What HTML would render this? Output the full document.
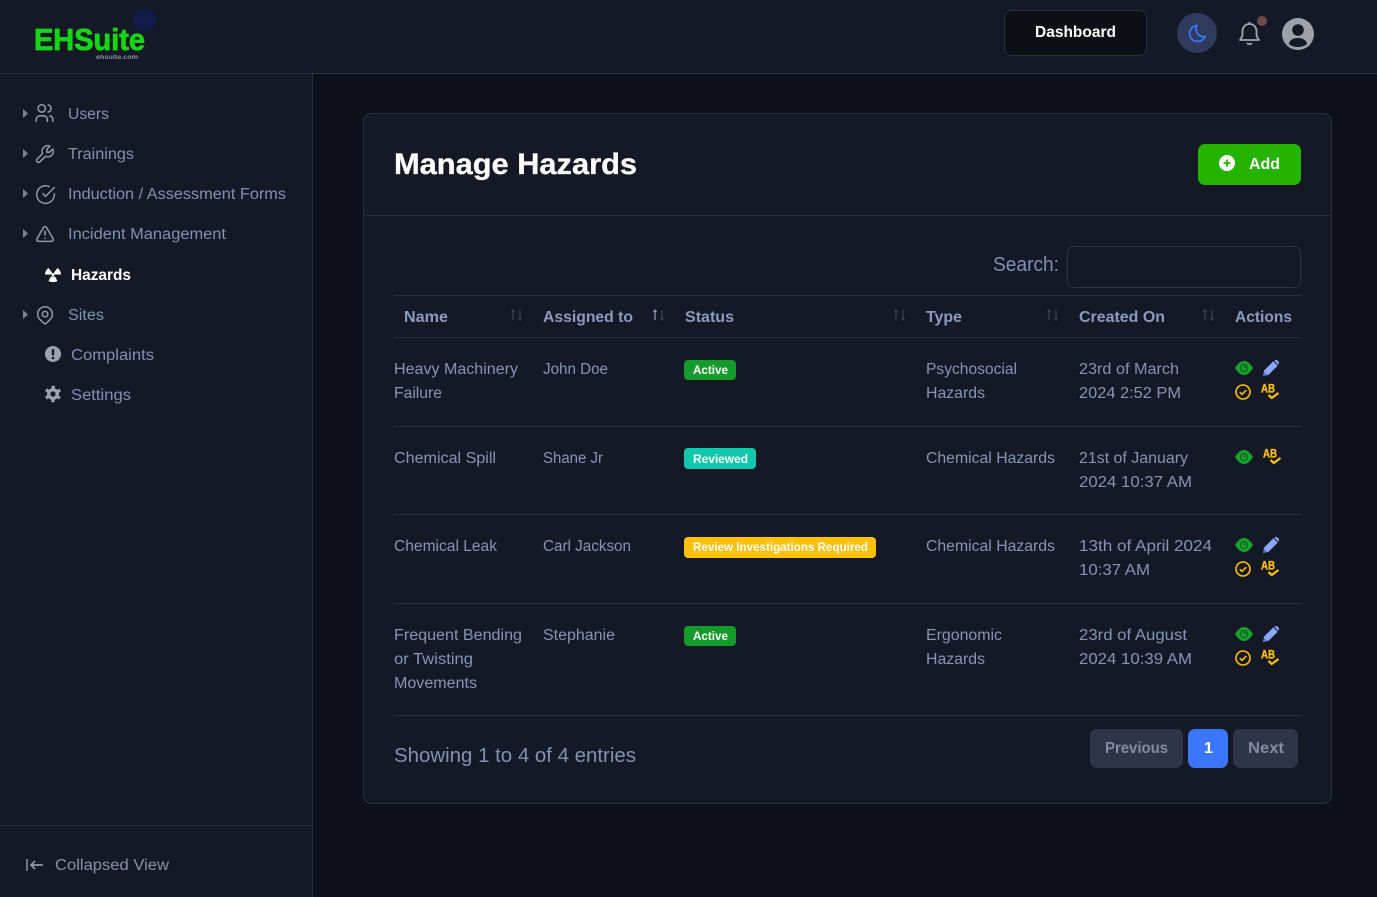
<!DOCTYPE html>
<html lang="en"><head><meta charset="utf-8"><title>Manage Hazards</title>
<style>
html,body{margin:0;padding:0;width:1377px;height:897px;overflow:hidden;background:#0e1119}
body{position:relative;font-family:"Liberation Sans",sans-serif}
.b{position:absolute;box-sizing:border-box}
svg{position:absolute;left:0;top:0}
text{font-family:"Liberation Sans",sans-serif}
.nav{font-size:15.5px;fill:#7f92b6}
.td{font-size:15.5px;fill:#8496b8}
.th{font-size:15.5px;font-weight:700;fill:#8a9cc0}
.bd{font-size:11.5px;font-weight:700;fill:#fff}
</style></head><body>
<div class="b" style="left:0;top:0;width:1377px;height:74px;background:#151926;border-bottom:1px solid #2b2f42"></div>
<div class="b" style="left:0;top:74px;width:313px;height:823px;background:#151926;border-right:1px solid #2b2f42"></div>
<div class="b" style="left:0;top:825px;width:312px;height:1px;background:#2b2f42"></div>
<div class="b" style="left:1004px;top:10px;width:143px;height:46px;background:#0d0f17;border:1px solid #2b2f42;border-radius:8px"></div>
<div class="b" style="left:363px;top:113px;width:969px;height:691px;background:#151926;border:1px solid #2b2f42;border-radius:9px"></div>
<div class="b" style="left:364px;top:215px;width:967px;height:1px;background:#2b2f42"></div>
<div class="b" style="left:1198px;top:144px;width:103px;height:41px;background:#24b300;border-radius:7px"></div>
<div class="b" style="left:1067px;top:246px;width:234px;height:42px;border:1px solid #2f3347;border-radius:7px"></div>
<div class="b" style="left:394px;top:295px;width:907px;height:1px;background:#2b2f42"></div>
<div class="b" style="left:394px;top:337px;width:907px;height:1px;background:#2b2f42"></div>
<div class="b" style="left:394px;top:426px;width:907px;height:1px;background:#2b2f42"></div>
<div class="b" style="left:394px;top:514px;width:907px;height:1px;background:#2b2f42"></div>
<div class="b" style="left:394px;top:603px;width:907px;height:1px;background:#2b2f42"></div>
<div class="b" style="left:394px;top:715px;width:907px;height:1px;background:#2b2f42"></div>
<div class="b" style="left:684px;top:360px;width:52px;height:20px;background:#159b2c;border-radius:4px"></div>
<div class="b" style="left:684px;top:448px;width:72px;height:21px;background:#12c8ac;border-radius:4px"></div>
<div class="b" style="left:684px;top:537px;width:192px;height:21px;background:#ffc107;border-radius:4px"></div>
<div class="b" style="left:684px;top:626px;width:52px;height:20px;background:#159b2c;border-radius:4px"></div>
<div class="b" style="left:1090px;top:729px;width:93px;height:39px;background:#2f3548;border-radius:7px"></div>
<div class="b" style="left:1188px;top:729px;width:40px;height:39px;background:#3b76ff;border-radius:7px"></div>
<div class="b" style="left:1233px;top:729px;width:65px;height:39px;background:#2f3548;border-radius:7px"></div>

<svg width="1377" height="897" viewBox="0 0 1377 897" xmlns="http://www.w3.org/2000/svg">
<defs>
<g id="eye"><path d="M0 7C3 2 6 0 9 0s6 2 9 7c-3 5-6 7-9 7S3 12 0 7z" fill="#16a12d"/><circle cx="9" cy="7" r="3.600" fill="none" stroke="#0c5a1e" stroke-width="1.100"/><path d="M9 4.800a2.200 2.200 0 0 1 2.200 2.200H9z" fill="#0c5a1e"/></g>
<g id="pen"><path d="M0 16l1.200-5.600L10.300 1.300l4.400 4.400-9.100 9.100z" fill="#8aa8ff"/><path d="M11.500.6c.9-.8 2.200-.8 3.100 0l.8.8c.8.9.8 2.200 0 3.100l-.2.2-3.900-3.900z" fill="#8aa8ff"/><path d="M0 16l1-4.200 3.200 3.200z" fill="#5d77c4"/></g>
<g id="chk"><circle cx="8" cy="8" r="7" fill="none" stroke="#ffc107" stroke-width="1.600"/><path d="M4.800 8.200l2.200 2.200 4.200-4.200" fill="none" stroke="#ffc107" stroke-width="1.600"/></g>
<g id="abc"><text x="0" y="8.500" font-size="11.500" font-weight="700" fill="#ffc107" stroke="#ffc107" stroke-width=".35" textLength="14" lengthAdjust="spacingAndGlyphs">AB</text><path d="M7.500 11l3.300 3 6.700-5" fill="none" stroke="#ffc107" stroke-width="2.200"/></g>
<g id="sort"><path d="M3 12V2M1.500 4L3 2l1.500 2" fill="none" stroke="#3b4154" stroke-width="1.200"/><path d="M10 2v10M8.500 10L10 12l1.500-2" fill="none" stroke="#3b4154" stroke-width="1.200"/></g>
<path id="car" d="M0 0l5 4.500L0 9z" fill="#7d8496"/>
</defs>

<!-- logo -->
<circle cx="145" cy="20" r="11.500" fill="#101c4a"/>
<text x="34" y="50" font-size="31" font-weight="700" fill="#15d615" stroke="#15d615" stroke-width=".8" textLength="111" lengthAdjust="spacingAndGlyphs">EHSuite</text>
<text x="96" y="59" font-size="6.500" font-weight="700" fill="#8d929c" textLength="42" lengthAdjust="spacingAndGlyphs">ehsuite.com</text>

<!-- top bar -->
<text x="1035" y="37" font-size="16" font-weight="700" fill="#fff" textLength="81" lengthAdjust="spacingAndGlyphs">Dashboard</text>
<circle cx="1197" cy="33" r="20" fill="#2f3b5c"/>
<path d="M1197 25.500a8 8 0 1 0 8 11 7.500 7.500 0 0 1-8-11z" fill="none" stroke="#3b76f6" stroke-width="1.800" stroke-linejoin="round"/>
<g fill="none" stroke="#a4a7ae" stroke-width="1.800" stroke-linecap="round" stroke-linejoin="round"><path d="M1249.500 24c-4.500 0-7 3.500-7 7.500v3c0 2.500-1.500 3.800-2.500 5.500h19c-1-1.700-2.500-3-2.500-5.500v-3c0-4-2.500-7.500-7-7.500z"/><path d="M1247.500 43.500a3 3 0 0 0 4 0"/><path d="M1249.500 22.500V24"/></g>
<circle cx="1262" cy="21" r="5" fill="#6e4a48"/>
<circle cx="1298" cy="34" r="16" fill="#9ea1a8"/>
<circle cx="1298" cy="30" r="5.800" fill="#151926"/>
<path d="M1289 44c.5-3.800 4-6 9-6s8.500 2.200 9 6c-2.300 2-5.500 3-9 3s-6.700-1-9-3z" fill="#151926"/>

<!-- sidebar carets -->
<use href="#car" x="23" y="109"/><use href="#car" x="23" y="149"/><use href="#car" x="23" y="189"/><use href="#car" x="23" y="229"/><use href="#car" x="23" y="310"/>

<!-- sidebar icons -->
<g fill="none" stroke="#9297a8" stroke-width="1.700" stroke-linecap="round" stroke-linejoin="round">
<g transform="translate(33.500,102) scale(.92)"><circle cx="9" cy="7" r="4"/><path d="M3 21v-2a4 4 0 0 1 4-4h4a4 4 0 0 1 4 4v2"/><path d="M16 3.130a4 4 0 0 1 0 7.750"/><path d="M21 21v-2a4 4 0 0 0-3-3.850"/></g>
<g transform="translate(56,143) scale(-.92,.92)"><path d="M7 10h3V7L6.500 3.500a6 6 0 0 1 8 8l6 6a2 2 0 0 1-3 3l-6-6a6 6 0 0 1-8-8L7 10"/></g>
<g transform="translate(35,184) scale(.88)"><path d="M22 11.080V12a10 10 0 1 1-5.930-9.140"/><path d="M22 4L12 14.010l-3-3"/></g>
<g transform="translate(34,223) scale(.92)"><path d="M12 9v4m0 3.500v.01"/><path d="M5 20h14a2 2 0 0 0 1.840-2.750L13.740 5a2 2 0 0 0-3.500 0L3.140 17.250A2 2 0 0 0 4.890 20"/></g>
<g transform="translate(34,304) scale(.92)"><circle cx="12" cy="11" r="3"/><path d="M17.657 16.657L13.414 20.900a2 2 0 0 1-2.827 0l-4.244-4.243a8 8 0 1 1 11.314 0z"/></g>
</g>
<!-- hazards icon -->
<g fill="#fff"><circle cx="53" cy="274.500" r="1.500"/><path d="M48.500 268L52 272.500L51 274.500H45C45 272 46.500 269.500 48.500 268z"/><path d="M57.500 268L54 272.500L55 274.500H61C61 272 59.500 269.500 57.500 268z"/><path d="M51 276.500H55L57.500 281C55 282.500 51 282.500 48.500 281z"/></g>
<!-- complaints -->
<circle cx="53" cy="354" r="8" fill="#9ca3af"/><rect x="51.800" y="349" width="2.400" height="6.500" rx="1" fill="#151926"/><circle cx="53" cy="358" r="1.400" fill="#151926"/>
<!-- settings -->
<circle cx="53" cy="394" r="6" fill="#9ca3af"/>
<circle cx="53" cy="394" r="7" fill="none" stroke="#9ca3af" stroke-width="2.500" stroke-dasharray="3.300 4.030" stroke-dashoffset="1.650" transform="rotate(30 53 394)"/>
<circle cx="53" cy="394" r="2.600" fill="#151926"/>

<!-- sidebar text -->
<text class="nav" x="68" y="119" textLength="41" lengthAdjust="spacingAndGlyphs">Users</text>
<text class="nav" x="68" y="159" textLength="66" lengthAdjust="spacingAndGlyphs">Trainings</text>
<text class="nav" x="68" y="199" textLength="218" lengthAdjust="spacingAndGlyphs">Induction / Assessment Forms</text>
<text class="nav" x="68" y="239" textLength="158" lengthAdjust="spacingAndGlyphs">Incident Management</text>
<text x="71" y="280" font-size="15.500" font-weight="700" fill="#fff" textLength="60" lengthAdjust="spacingAndGlyphs">Hazards</text>
<text class="nav" x="68" y="320" textLength="36" lengthAdjust="spacingAndGlyphs">Sites</text>
<text class="nav" x="71" y="360" textLength="83" lengthAdjust="spacingAndGlyphs">Complaints</text>
<text class="nav" x="71" y="400" textLength="60" lengthAdjust="spacingAndGlyphs">Settings</text>
<path d="M27 859v12" stroke="#9297a8" stroke-width="1.500" fill="none"/><path d="M43 865H31M35 861l-4 4 4 4" stroke="#9297a8" stroke-width="1.700" fill="none"/>
<text x="55" y="870" font-size="15.500" fill="#8a90a5" textLength="114" lengthAdjust="spacingAndGlyphs">Collapsed View</text>

<!-- card header -->
<text x="394" y="174" font-size="30" font-weight="700" fill="#fff" stroke="#fff" stroke-width=".3" textLength="243" lengthAdjust="spacingAndGlyphs">Manage Hazards</text>
<circle cx="1227" cy="163" r="8" fill="#fff"/><path d="M1227 159.500v7M1223.500 163h7" stroke="#24b300" stroke-width="1.800"/>
<text x="1249" y="169" font-size="16" font-weight="700" fill="#fff" textLength="31" lengthAdjust="spacingAndGlyphs">Add</text>
<text x="993" y="271" font-size="20" fill="#7f92b6" textLength="66" lengthAdjust="spacingAndGlyphs">Search:</text>

<!-- table head -->
<text class="th" x="404" y="322" textLength="44" lengthAdjust="spacingAndGlyphs">Name</text>
<text class="th" x="543" y="322" textLength="90" lengthAdjust="spacingAndGlyphs">Assigned to</text>
<text class="th" x="685" y="322" textLength="49" lengthAdjust="spacingAndGlyphs">Status</text>
<text class="th" x="926" y="322" textLength="36" lengthAdjust="spacingAndGlyphs">Type</text>
<text class="th" x="1079" y="322" textLength="86" lengthAdjust="spacingAndGlyphs">Created On</text>
<text class="th" x="1235" y="322" textLength="57" lengthAdjust="spacingAndGlyphs">Actions</text>
<use href="#sort" x="510" y="308"/>
<use href="#sort" x="652" y="308"/><path d="M655 320V310M653.500 312l1.500-2 1.500 2" fill="none" stroke="#8a9aba" stroke-width="1.200"/>
<use href="#sort" x="893" y="308"/><use href="#sort" x="1046" y="308"/><use href="#sort" x="1202" y="308"/>

<!-- rows -->
<text class="td" x="394" y="374" textLength="124" lengthAdjust="spacingAndGlyphs">Heavy Machinery</text>
<text class="td" x="394" y="398" textLength="48" lengthAdjust="spacingAndGlyphs">Failure</text>
<text class="td" x="543" y="374" textLength="65" lengthAdjust="spacingAndGlyphs">John Doe</text>
<text class="bd" x="693" y="374" textLength="35" lengthAdjust="spacingAndGlyphs">Active</text>
<text class="td" x="926" y="374" textLength="91" lengthAdjust="spacingAndGlyphs">Psychosocial</text>
<text class="td" x="926" y="398" textLength="59" lengthAdjust="spacingAndGlyphs">Hazards</text>
<text class="td" x="1079" y="374" textLength="100" lengthAdjust="spacingAndGlyphs">23rd of March</text>
<text class="td" x="1079" y="398" textLength="102" lengthAdjust="spacingAndGlyphs">2024 2:52 PM</text>
<use href="#eye" x="1235" y="361"/><use href="#pen" x="1263" y="360"/><use href="#chk" x="1235" y="384"/><use href="#abc" x="1261" y="384"/>

<text class="td" x="394" y="463" textLength="102" lengthAdjust="spacingAndGlyphs">Chemical Spill</text>
<text class="td" x="543" y="463" textLength="60" lengthAdjust="spacingAndGlyphs">Shane Jr</text>
<text class="bd" x="693" y="463" textLength="55" lengthAdjust="spacingAndGlyphs">Reviewed</text>
<text class="td" x="926" y="463" textLength="129" lengthAdjust="spacingAndGlyphs">Chemical Hazards</text>
<text class="td" x="1079" y="463" textLength="109" lengthAdjust="spacingAndGlyphs">21st of January</text>
<text class="td" x="1079" y="487" textLength="113" lengthAdjust="spacingAndGlyphs">2024 10:37 AM</text>
<use href="#eye" x="1235" y="450"/><use href="#abc" x="1263" y="449"/>

<text class="td" x="394" y="551" textLength="103" lengthAdjust="spacingAndGlyphs">Chemical Leak</text>
<text class="td" x="543" y="551" textLength="88" lengthAdjust="spacingAndGlyphs">Carl Jackson</text>
<text class="bd" x="693" y="551" textLength="175" lengthAdjust="spacingAndGlyphs">Review Investigations Required</text>
<text class="td" x="926" y="551" textLength="129" lengthAdjust="spacingAndGlyphs">Chemical Hazards</text>
<text class="td" x="1079" y="551" textLength="133" lengthAdjust="spacingAndGlyphs">13th of April 2024</text>
<text class="td" x="1079" y="575" textLength="71" lengthAdjust="spacingAndGlyphs">10:37 AM</text>
<use href="#eye" x="1235" y="538"/><use href="#pen" x="1263" y="537"/><use href="#chk" x="1235" y="561"/><use href="#abc" x="1261" y="561"/>

<text class="td" x="394" y="640" textLength="128" lengthAdjust="spacingAndGlyphs">Frequent Bending</text>
<text class="td" x="394" y="664" textLength="79" lengthAdjust="spacingAndGlyphs">or Twisting</text>
<text class="td" x="394" y="688" textLength="83" lengthAdjust="spacingAndGlyphs">Movements</text>
<text class="td" x="543" y="640" textLength="72" lengthAdjust="spacingAndGlyphs">Stephanie</text>
<text class="bd" x="693" y="640" textLength="35" lengthAdjust="spacingAndGlyphs">Active</text>
<text class="td" x="926" y="640" textLength="76" lengthAdjust="spacingAndGlyphs">Ergonomic</text>
<text class="td" x="926" y="664" textLength="59" lengthAdjust="spacingAndGlyphs">Hazards</text>
<text class="td" x="1079" y="640" textLength="108" lengthAdjust="spacingAndGlyphs">23rd of August</text>
<text class="td" x="1079" y="664" textLength="113" lengthAdjust="spacingAndGlyphs">2024 10:39 AM</text>
<use href="#eye" x="1235" y="627"/><use href="#pen" x="1263" y="626"/><use href="#chk" x="1235" y="650"/><use href="#abc" x="1261" y="650"/>

<!-- footer -->
<text x="394" y="762" font-size="20" fill="#7f92b6" textLength="242" lengthAdjust="spacingAndGlyphs">Showing 1 to 4 of 4 entries</text>
<text x="1105" y="753" font-size="16" font-weight="700" fill="#838ca6" textLength="63" lengthAdjust="spacingAndGlyphs">Previous</text>
<text x="1204" y="753" font-size="16" font-weight="700" fill="#fff" textLength="9" lengthAdjust="spacingAndGlyphs">1</text>
<text x="1248" y="753" font-size="16" font-weight="700" fill="#838ca6" textLength="36" lengthAdjust="spacingAndGlyphs">Next</text>
</svg>
</body></html>
